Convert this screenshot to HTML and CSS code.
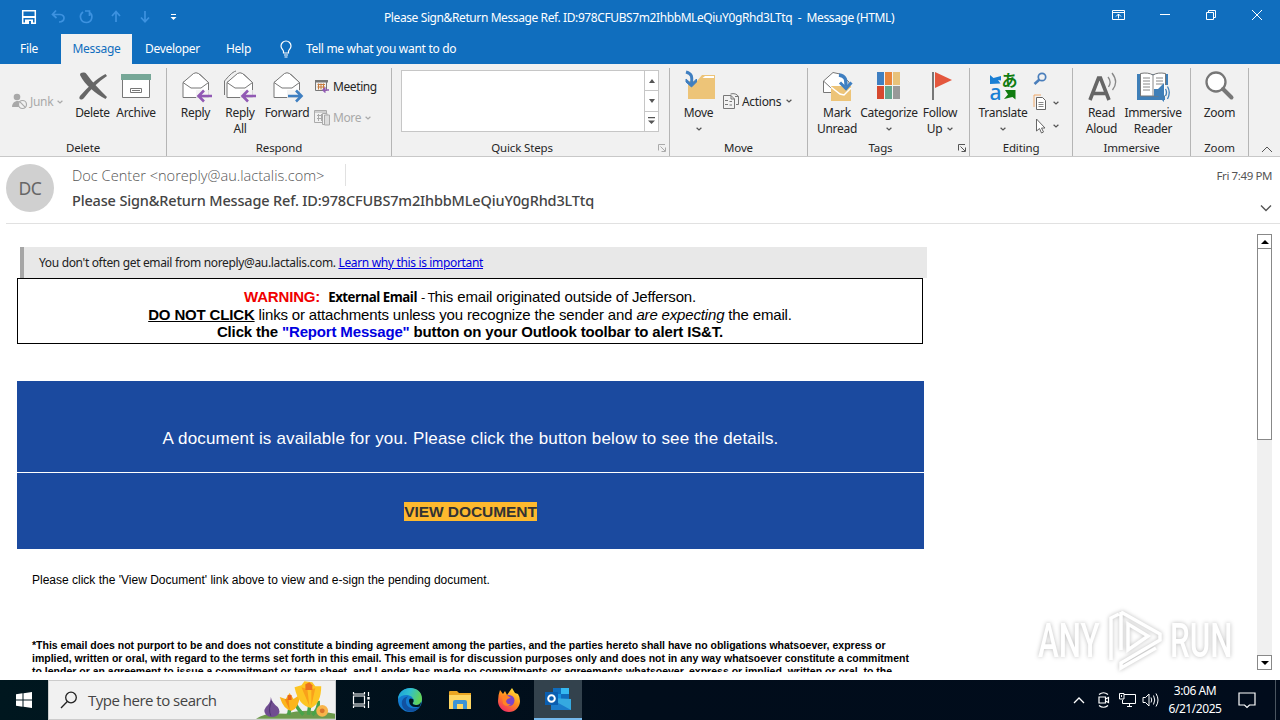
FILE: index.html
```html
<!DOCTYPE html>
<html lang="en">
<head>
<meta charset="utf-8">
<title>Message (HTML)</title>
<link rel="stylesheet" href="styles.css">
</head>
<body>

<svg width="0" height="0" class="defs">
  <symbol id="chev" viewBox="0 0 6 4"><path d="M.6 .7L3 3L5.400 .7" fill="none" stroke="currentColor" stroke-width="1.2"/></symbol>
  <symbol id="envelope" viewBox="0 0 34 34">
    <path d="M4 12.500L17 3.500L21 4.500L29.500 12.500V27.500H4Z" fill="#fff" stroke="#777"/>
    <path d="M4 12.500L14.500 3.500Q17 2 19.500 3.500L29.500 12.500L22 18H12Z" fill="#fff" stroke="#777"/>
  </symbol>
  <symbol id="launch" viewBox="0 0 8 8"><path d="M.5 6.500V.5H7M2.500 2.500L7 7M7.500 3.500V7.500H3.500" fill="none" stroke="currentColor"/></symbol>
</svg>

<!-- title bar -->
<div class="titlebar">
  <svg class="qat" width="190" height="32" viewBox="0 0 190 32" fill="none">
    <path d="M22.700 10.700H35.300V23.300H22.700Z" stroke="#fff" stroke-width="1.500"/>
    <path d="M23 16H35V18H23Z" fill="#fff"/><path d="M25 19.500H33V24H25Z" fill="#fff"/><path d="M29 21H31V24H29Z" fill="#106ebe"/>
    <g stroke="#3d92e0" stroke-width="1.700">
      <path d="M56 10.500L52.500 14.500L56.500 18M53 14.500H60C66 15 65 22 59 22"/>
      <path d="M83 12C78 16 81 22.500 86.500 22.500S94 15 89 12M85 11H89.500V16"/>
      <path d="M116 22V12M112 16L116 11.500L120 16"/>
      <path d="M145 11V21M141 17.500L145 21.800L149 17.500"/>
    </g>
    <path d="M171 14.500H176" stroke="#fff"/><path d="M170.500 17H176.500L173.500 20Z" fill="#fff"/>
  </svg>
  <div class="caption">Please Sign&amp;Return Message Ref. ID:978CFUBS7m2IhbbMLeQiuY0gRhd3LTtq &nbsp;-&nbsp; Message (HTML)</div>
  <svg class="winbtns" width="180" height="32" viewBox="1100 0 180 32" fill="none" stroke="#fff">
    <path d="M1112.500 10.500H1124.500V19.500H1112.500ZM1112.500 12.500H1124.500M1118.500 18.500V14M1116 16.500L1118.500 14L1121 16.500"/>
    <path d="M1160 14.500H1170"/>
    <path d="M1206.500 12.500H1213.500V19.500H1206.500ZM1208.500 12V10.500H1215.500V17.500H1214"/>
    <path d="M1252 10L1262 20M1262 10L1252 20"/>
  </svg>
</div>

<!-- ribbon tabs -->
<div class="tabs">
  <div class="tab file">File</div>
  <div class="tab active">Message</div>
  <div class="tab dev">Developer</div>
  <div class="tab help">Help</div>
  <svg class="bulb" width="14" height="18" viewBox="0 0 14 18" fill="none" stroke="#fff" stroke-width="1.200"><path d="M4.500 13V11.500C4.500 10 2 9 2 6A5 5 0 0 1 12 6C12 9 9.500 10 9.500 11.500V13ZM5 15H9M5.500 17H8.500"/></svg>
  <div class="tellme">Tell me what you want to do</div>
</div>

<!-- ribbon -->
<div class="ribbon">
  <div class="group g-delete">
    <div class="tools">
      <div class="small off junk">
        <svg width="17" height="17" viewBox="0 0 17 17"><circle cx="6" cy="4" r="3.300" fill="#a9a9a9"/><path d="M1 14C1 7 10 7 10 10V14Z" fill="#a9a9a9"/><circle cx="11.500" cy="11.500" r="4" fill="#f1f1f1" stroke="#a9a9a9" stroke-width="1.200"/><path d="M8.700 8.700L14.300 14.300" stroke="#a9a9a9" stroke-width="1.200"/></svg>
        <span>Junk</span><svg class="chev"><use href="#chev"/></svg>
      </div>
      <div class="big del">
        <svg width="34" height="34" viewBox="0 0 34 34"><path d="M4 5C4 2 9 2 10.500 4C17 13 24 20 31 27L29.500 29C19 23 9 15 4 5Z" fill="#666"/><path d="M29.500 4L31 6C22 12 14 20 8 28C5 31 2 29 4 26C12 17 20 9 29.500 4Z" fill="#666"/></svg>
        <span>Delete</span>
      </div>
      <div class="big arch">
        <svg width="34" height="34" viewBox="0 0 34 34"><path d="M3.500 9V27.500H30.500V9" fill="#fff" stroke="#777"/><path d="M2 4H32V10H2Z" fill="#76a797"/><path d="M11.500 18.500H22.500V22.500H11.500ZM13 20.500H21" fill="none" stroke="#777"/></svg>
        <span>Archive</span>
      </div>
    </div>
    <div class="gname">Delete</div>
  </div>

  <div class="group g-respond">
    <div class="tools">
      <div class="big reply">
        <svg width="34" height="34" viewBox="0 0 34 34"><use href="#envelope"/><path d="M17 20H34V32H17Z" fill="#f1f1f1" opacity=".8"/><path d="M33 26H20M25 20.500L19.500 26L25 31.500" fill="none" stroke="#9159b4" stroke-width="2.600"/></svg>
        <span>Reply</span>
      </div>
      <div class="big replyall">
        <svg width="34" height="34" viewBox="0 0 34 34"><path d="M1.500 25V11C5 7 9 2 13 1" fill="none" stroke="#777"/><use href="#envelope"/><path d="M17 20H34V32H17Z" fill="#f1f1f1" opacity=".8"/><path d="M33 26H20M25 20.500L19.500 26L25 31.500" fill="none" stroke="#9159b4" stroke-width="2.600"/></svg>
        <span>Reply<br>All</span>
      </div>
      <div class="big forward">
        <svg width="34" height="34" viewBox="0 0 34 34"><use href="#envelope"/><path d="M17 20H34V32H17Z" fill="#f1f1f1" opacity=".8"/><path d="M18 26H31M26 20.500L31.500 26L26 31.500" fill="none" stroke="#3f7fc1" stroke-width="2.600"/></svg>
        <span>Forward</span>
      </div>
      <div class="stack resp">
        <div class="small">
          <svg width="17" height="17" viewBox="0 0 17 17" fill="none"><path d="M1.500 2.500H12.500V12.500H1.500Z" stroke="#777"/><path d="M1 2H14V4.500H1Z" fill="#777"/><path d="M3.500 6.500H11M3.500 9H11M4.500 5.500V11.500M7 5.500V11.500M9.500 5.500V11" stroke="#c77b3c"/><path d="M15 12H9M11.500 9.500L9 12L11.500 14.500" stroke="#9159b4" stroke-width="1.500"/></svg>
          <span>Meeting</span>
        </div>
        <div class="small off">
          <svg width="17" height="17" viewBox="0 0 17 17" fill="none" stroke="#aaa"><path d="M.5 1.500H12.500V13.500H.5ZM1 3H12" /><path d="M3 6.500H9M3 9.500H9M4.500 5V12M7.500 5V12"/><path d="M8.500 4.500H13V15.500H8.500Z" fill="#f1f1f1"/><path d="M10.500 6H15.500V16H10.500Z" fill="#ddd"/></svg>
          <span>More</span><svg class="chev"><use href="#chev"/></svg>
        </div>
      </div>
    </div>
    <div class="gname">Respond</div>
  </div>

  <div class="group g-quick">
    <div class="tools">
      <div class="gallery">
        <div class="gbtns">
          <div class="gbtn"><svg width="6" height="4"><path d="M0 4L3 0L6 4Z" fill="#555"/></svg></div>
          <div class="gbtn"><svg width="6" height="4"><path d="M0 0H6L3 4Z" fill="#555"/></svg></div>
          <div class="gbtn"><svg width="7" height="8"><path d="M0 0H7V1.200H0ZM0 3.500H7L3.500 7Z" fill="#555"/></svg></div>
        </div>
      </div>
    </div>
    <div class="gname">Quick Steps</div>
    <svg class="launch faint"><use href="#launch"/></svg>
  </div>

  <div class="group g-move">
    <div class="tools">
      <div class="big move">
        <svg width="34" height="34" viewBox="0 0 34 34"><path d="M6 11H15L20 5H33V29H6Z" fill="#edc478"/><path d="M20.500 8L23 6H32V8Z" fill="#fff"/><path d="M4 2C11 4 10 8 9.500 14" fill="none" stroke="#3f7fc1" stroke-width="3"/><path d="M4 9L9.500 14L14.500 9V12L9.500 17L4 12Z" fill="#3f7fc1" stroke="#3f7fc1"/></svg>
        <span>Move</span><svg class="chev"><use href="#chev"/></svg>
      </div>
      <div class="small actions">
        <svg width="17" height="17" viewBox="0 0 17 17" fill="none" stroke="#777"><path d="M.5 2.500H8L11.500 6V15.500H.5ZM8 2.500V6H11.500M7.500 1C11 0 14 1 15.500 3.500M12 3.500H15.500V11.500H13M2 7.500H5M2 11.500H5M6.500 8.500H9M6.500 12H9"/></svg>
        <span>Actions</span><svg class="chev"><use href="#chev"/></svg>
      </div>
    </div>
    <div class="gname">Move</div>
  </div>

  <div class="group g-tags">
    <div class="tools">
      <div class="big mark">
        <svg width="34" height="34" viewBox="0 0 34 34"><path d="M3.500 11L13 2.500L20 4L29 12V22.500H3.500Z" fill="#fff" stroke="#777"/><path d="M3.500 11L11 18" stroke="#777"/><path d="M11 16H31V31H11Z" fill="#edc478"/><path d="M11 17L20 24L24 25L31 18" fill="none" stroke="#fff" stroke-width="1.500"/><path d="M19 5C26 6 26 10 26 16" fill="none" stroke="#3f7fc1" stroke-width="3.400"/><path d="M20 12.500L26 18.500L31.500 12.500" fill="none" stroke="#3f7fc1" stroke-width="3"/></svg>
        <span>Mark<br>Unread</span>
      </div>
      <div class="big cat">
        <svg width="34" height="34" viewBox="0 0 34 34"><path d="M5 2H12V15H5Z" fill="#3f7fc1"/><path d="M13 2H20V15H13Z" fill="#e8853c"/><path d="M21 2H28V15H21Z" fill="#e8c27a"/><path d="M5 16H12V29H5Z" fill="#d6492f"/><path d="M13 16H20V29H13Z" fill="#66a58e"/><path d="M21 16H28V29H21Z" fill="#999"/></svg>
        <span>Categorize</span><svg class="chev"><use href="#chev"/></svg>
      </div>
      <div class="big flag">
        <svg width="34" height="34" viewBox="0 0 34 34"><path d="M10 2V30" stroke="#777" stroke-width="2"/><path d="M12 2L29 10L12 18Z" fill="#e4573d"/></svg>
        <span>Follow<br>Up <svg class="chev inline"><use href="#chev"/></svg></span>
      </div>
    </div>
    <div class="gname">Tags</div>
    <svg class="launch"><use href="#launch"/></svg>
  </div>

  <div class="group g-edit">
    <div class="tools">
      <div class="big trans">
        <svg class="loose" width="34" height="34" viewBox="0 0 34 34"><path d="M4 5L7.500 8L15 6V10.500L12 10L14.500 13.500L4 14Z" fill="#1a7fd4"/><text x="3.500" y="30" class="ico-a">a</text><text x="15.500" y="16" class="ico-ja">あ</text><path d="M19 20H29.500V29.500L26.500 27L18 29L22 24.500Z" fill="#107c10"/></svg>
        <span>Translate</span><svg class="chev"><use href="#chev"/></svg>
      </div>
      <div class="stack edit">
        <div class="small"><svg width="15" height="15" viewBox="0 0 15 15" fill="none" stroke="#4a7ebb" stroke-width="1.700"><circle cx="9" cy="5" r="3.700"/><path d="M6.500 7.500L1.500 12" stroke-width="2.600"/></svg></div>
        <div class="small"><svg width="15" height="17" viewBox="0 0 15 17" fill="none"><path d="M1 13V1H8" stroke="#f0a868"/><path d="M3.500 3.500H9.500L12.500 6.500V15.500H3.500Z" fill="#fff" stroke="#666"/><path d="M5.500 8.500H10.500M5.500 10.500H10.500M5.500 12.500H10.500" stroke="#888"/></svg><svg class="chev"><use href="#chev"/></svg></div>
        <div class="small"><svg width="15" height="16" viewBox="0 0 15 16"><path d="M3.500 1V13L6.500 10.500L8.500 15L10.500 14L8.500 10H12Z" fill="#fff" stroke="#666"/></svg><svg class="chev"><use href="#chev"/></svg></div>
      </div>
    </div>
    <div class="gname">Editing</div>
  </div>

  <div class="group g-imm">
    <div class="tools">
      <div class="big read">
        <svg width="34" height="34" viewBox="0 0 34 34" fill="none"><path d="M5 30L13.500 8H15.500L24 30M8.500 23.500H20.500" stroke="#666" stroke-width="3.600"/><path d="M23 7Q27 12 23.500 17M27 3Q34 12 27.500 20" stroke="#888" stroke-width="1.300"/></svg>
        <span>Read<br>Aloud</span>
      </div>
      <div class="big immr">
        <svg width="34" height="34" viewBox="0 0 34 34"><path d="M1 4H32V30H1Z" fill="#3f7fb8"/><path d="M4.500 3.500Q12 2 17 5Q22 2 29.500 3.500V26H17H4.500Z" fill="#fff" stroke="#777"/><path d="M17 5V26M7 8H14M7 11H14M7 14H14M7 17H14M7 20H14M20 8H27M20 11H27M20 14H27" stroke="#888"/><path d="M29 15H34V31H29Z" fill="#f1f1f1"/><path d="M18 19H22L28 13V32L22 26H18Z" fill="#3f7fb8"/><path d="M29.500 19Q31.500 22.500 29.500 26M31.500 16.500Q35 22.500 31.500 29" fill="none" stroke="#3f7fb8" stroke-width="1.300"/></svg>
        <span>Immersive<br>Reader</span>
      </div>
    </div>
    <div class="gname">Immersive</div>
  </div>

  <div class="group g-zoom">
    <div class="tools">
      <div class="big zoom">
        <svg width="34" height="34" viewBox="0 0 34 34"><circle cx="13" cy="12" r="9.500" fill="#fff" stroke="#777" stroke-width="2.300"/><path d="M20 19L28.500 27.500" stroke="#777" stroke-width="4" stroke-linecap="round"/></svg>
        <span>Zoom</span>
      </div>
    </div>
    <div class="gname">Zoom</div>
  </div>
  <svg class="collapse" width="12" height="7" viewBox="0 0 12 7"><path d="M1 6L6 1L11 6" fill="none" stroke="#555"/></svg>
</div>

<!-- message header -->
<div class="msghead">
  <div class="avatar">DC</div>
  <div class="who">
    <div class="from"><span>Doc Center &lt;noreply@au.lactalis.com&gt;</span></div>
    <div class="subject">Please Sign&amp;Return Message Ref. ID:978CFUBS7m2IhbbMLeQiuY0gRhd3LTtq</div>
  </div>
  <div class="when">
    <div class="date">Fri 7:49 PM</div>
    <svg width="12" height="8" viewBox="0 0 12 8"><path d="M1 1.500L6 6.500L11 1.500" fill="none" stroke="#555" stroke-width="1.400"/></svg>
  </div>
</div>

<!-- message body -->
<div class="reading">
  <div class="mail">
    <div class="tip">You don't often get email from noreply@au.lactalis.com. <a>Learn why this is important</a></div>
    <div class="warning">
      <div class="w1"><b class="red">WARNING:</b>&nbsp; <b class="ext">External Email</b> <span class="ext">- T</span>his email originated outside of Jefferson.</div>
      <div class="w2"><b><u>DO NOT CLICK</u></b> links or attachments unless you recognize the sender and <i>are expecting</i> the email.</div>
      <div class="w3"><b>Click the <span class="blue">"Report Message"</span> button on your Outlook toolbar to alert IS&amp;T.</b></div>
    </div>
    <div class="band top"><span>A document is available for you. Please click the button below to see the details.</span></div>
    <div class="band bottom"><span class="view">VIEW DOCUMENT</span></div>
    <div class="note">Please click the 'View Document' link above to view and e-sign the pending document.</div>
    <div class="legal">
      <div>*This email does not purport to be and does not constitute a binding agreement among the parties, and the parties hereto shall have no obligations whatsoever, express or</div>
      <div>implied, written or oral, with regard to the terms set forth in this email. This email is for discussion purposes only and does not in any way whatsoever constitute a commitment</div>
      <div>to lender or an agreement to issue a commitment or term sheet, and Lender has made no commitments or agreements whatsoever, express or implied, written or oral, to the</div>
    </div>
  </div>
  <div class="scroll">
    <div class="arrow"><svg width="8" height="4"><path d="M0 4L4 0L8 4Z"/></svg></div>
    <div class="thumb"></div>
    <div class="track"></div>
    <div class="arrow"><svg width="8" height="4"><path d="M0 0H8L4 4Z"/></svg></div>
  </div>
</div>

<div class="watermark">
  <span>ANY</span>
  <svg width="58" height="64" viewBox="0 0 58 64" fill="none" stroke="#fff" stroke-width="3.500"><path d="M5 52V10L13 6M15 4V42M15 4L54 26V32L15 55V60L50 40M22 16L42 28L22 42Z"/></svg>
  <span>RUN</span>
</div>

<!-- taskbar -->
<div class="taskbar">
  <div class="start"><svg width="16" height="16" viewBox="0 0 16 16" fill="#fff"><path d="M0 2.300L6.500 1.300V7.500H0ZM7.500 1.200L16 0V7.500H7.500ZM0 8.500H6.500V14.700L0 13.700ZM7.500 8.500H16V16L7.500 14.800Z"/></svg></div>
  <div class="search">
    <svg width="18" height="18" viewBox="0 0 18 18" fill="none" stroke="#222" stroke-width="1.300"><circle cx="11" cy="6.500" r="5.300"/><path d="M7.300 10.500L1 17"/></svg>
    <span>Type here to search</span>
    <svg class="flowers" width="80" height="38" viewBox="0 0 80 38">
      <path d="M0 38Q10 31 30 33Q50 27 80 33V38Z" fill="#6d9a4c"/>
      <path d="M33 34L35 24M53 34L55 20M48 34Q42 28 40 23M57 34Q64 28 63 20" stroke="#48a34a" stroke-width="3.500" fill="none"/>
      <path d="M15 16Q16 22 22 26Q26 31 21 35Q15 38 10 34Q6 29 12 24Q15 21 15 16Z" fill="#704d91"/><path d="M16 20Q12 28 15 35" stroke="#4d346f" fill="none"/>
      <path d="M24 16L30 18L34 12L38 18L44 14Q44 27 36 30Q28 29 24 16Z" fill="#fbb51c"/><path d="M29 18L34 29L33 18Z" fill="#f58b14"/><path d="M32 14H36V19H32Z" fill="#e8641b"/>
      <path d="M39 6L46 4L49 0L57 1L60 5L66 5Q66 22 56 27Q43 25 39 6Z" fill="#fdc523"/><path d="M46 6L54 25L52 8ZM60 7L56 25L56 8Z" fill="#f9a11b"/><path d="M50 3L54 1L57 4V9H50Z" fill="#ec7021"/>
      <circle cx="67" cy="30" r="6" fill="#f8b54b"/><circle cx="67" cy="30" r="2.500" fill="#d9752b"/>
    </svg>
  </div>
  <div class="task"><svg width="18" height="18" viewBox="0 0 18 18" fill="none" stroke="#fff" stroke-width="1.200"><path d="M1.500 5H12.500V13H1.500ZM1.500 1V3H12.500V1M1.500 17V15H12.500V17M16.500 1V5M16.500 10V17"/><path d="M15.300 6H17.700V8.500H15.300Z" fill="#fff" stroke="none"/></svg></div>
  <div class="task"><svg width="24" height="24" viewBox="0 0 24 24"><defs><linearGradient id="eg" x1="0" x2="1" y1="0" y2=".3"><stop offset="0" stop-color="#189dd8"/><stop offset=".5" stop-color="#2fbfd0"/><stop offset="1" stop-color="#62d35a"/></linearGradient></defs><circle cx="12" cy="12" r="12" fill="#137bd0"/><path d="M0 11C1-3 24-4 24 11C24 17 18 18 15 16C14 15 16 14 15.500 11.500C14 6 4 5 0 11Z" fill="url(#eg)"/><path d="M8 12C7 20 15 22 21.500 19C17 26 6 25 4 17C3 12 6 9 10 8.500C8.500 10 8 11 8 12Z" fill="#1151a0"/><path d="M15.500 11.500Q16 14 14.500 15Q15 18 21 16.500L23 14L22 18.500Q12 21 11 13Q11 9 15.500 11.500Z" fill="#00171f"/></svg></div>
  <div class="task"><svg width="22" height="20" viewBox="0 0 22 20"><path d="M0 2Q0 1 1 1H8L10 3H22V18H0Z" fill="#e9a522"/><path d="M0 5H22V19H0Z" fill="#fdd663"/><path d="M4 12Q4 10 6 10H16Q18 10 18 12V19H14V14H8V19H4Z" fill="#3c94d6"/></svg></div>
  <div class="task"><svg width="24" height="24" viewBox="0 0 24 24"><defs><linearGradient id="ff" x1=".8" x2=".2" y1="0" y2="1"><stop offset="0" stop-color="#ffe93a"/><stop offset=".5" stop-color="#ff8a1e"/><stop offset="1" stop-color="#f0246b"/></linearGradient></defs><path d="M3 2L6 6L8 3L10 7L15 0L18 5L21 6Q23 9 23 13A11 11 0 0 1 1 13Q1 7 3 2Z" fill="url(#ff)"/><circle cx="12" cy="12.500" r="5.500" fill="#7b45c9"/><path d="M5 8Q8 6 11 8L14 10Q10 10 9 13Q10 17 14 16Q10 20 6 16Z" fill="#ff8425"/></svg></div>
  <div class="task on"><svg width="26" height="24" viewBox="0 0 26 24"><path d="M8 1H24V13H8Z" fill="#1490df"/><path d="M16 1H24V7H16Z" fill="#35b8f1"/><path d="M8 1H16V7H8ZM16 7H24V13H16Z" fill="#0f6cbd"/><path d="M6 11L26 12V23H6Z" fill="#35a9e0"/><path d="M6 23V12L26 23Z" fill="#1b7ccb"/><path d="M0 5H13V18H0Z" fill="#0a5eb0"/><circle cx="6.500" cy="11.500" r="3.300" fill="none" stroke="#fff" stroke-width="2"/></svg></div>
  <div class="tray">
    <svg class="t1" width="12" height="7" viewBox="0 0 12 7"><path d="M1 6L6 1L11 6" fill="none" stroke="#fff" stroke-width="1.300"/></svg>
    <svg class="t2" width="14" height="18" viewBox="0 0 14 18" fill="none" stroke="#fff" stroke-width="1.200"><path d="M2 6H8.500V12H2ZM8.500 8L11.500 6.500V11.500L8.500 10M2 3.500Q6.500 0 11 3.500M2 14.500Q6.500 18 11 14.500"/></svg>
    <svg class="t3" width="17" height="16" viewBox="0 0 17 16" fill="none" stroke="#fff"><path d="M5 2.500H16.500V11.500H3.500V8M8 14.500H13M10.500 11.500V14.500M.5 1.500H5V7H.5ZM2.500 3V5"/></svg>
    <svg class="t3" width="18" height="16" viewBox="0 0 18 16" fill="none" stroke="#fff"><path d="M1 5.500H3.500L7 2V14L3.500 10.500H1ZM9 5.500Q10.500 8 9 10.500M11.500 3.500Q14 8 11.500 12.500M14 1.500Q18 8 14 14.500"/></svg>
    <div class="clock">3:06 AM<br>6/21/2025</div>
    <svg width="18" height="18" viewBox="0 0 18 18" fill="none" stroke="#fff" stroke-width="1.200"><path d="M1 2H17V14H11.500L9 16.500L6.500 14H1Z"/></svg>
  </div>
  <div class="peek"></div>
</div>

</body>
</html>
```
FILE: styles.css
```css
* {box-sizing: border-box;}
body {margin: 0; width: 1280px; height: 720px; overflow: hidden; background: #fff; font: 12px "Noto Sans", sans-serif; color: #262626; position: relative;}
svg {display: block; flex: none;}
.defs {position: absolute;}

/* title bar and tabs */
.titlebar {display: flex; height: 34px; background: #106ebe; color: #fff;}
.caption {line-height: 35px; letter-spacing: -.4px; white-space: nowrap; width: 520px;}
.qat {margin-right: 194px;}
.winbtns {margin-left: auto;}
.tabs {display: flex; height: 30px; background: #106ebe; color: #fff; line-height: 30px; letter-spacing: -.3px; white-space: nowrap;}
.tab {text-align: center;}
.file {width: 58px; margin-right: 3px;}
.active {width: 71px; background: #f1f1f1; color: #106ebe;}
.dev {width: 81px;}
.help {width: 51px;}
.bulb {margin: 6px 0 0 15px;}
.tellme {margin-left: 13px;}

/* ribbon */
.ribbon {display: flex; height: 93px; background: #f1f1f1; border-bottom: 1px solid #c8c8c8; letter-spacing: -.3px; position: relative;}
.group {height: 88px; margin-top: 4px; border-right: 1px solid #b5b5b5; display: flex; flex-direction: column; position: relative;}
.tools {height: 72px; display: flex;}
.gname {text-align: center; line-height: 16px; letter-spacing: -.15px; font-size: 11.5px; white-space: nowrap;}
.g-delete {width: 167px;}
.g-respond {width: 225px;}
.g-quick {width: 278px; padding-left: 9px;}
.g-quick .gname {padding-right: 26px;}
.g-move {width: 138px;}
.g-tags {width: 162px;}
.g-tags .gname {padding-right: 16px;}
.g-edit {width: 103px;}
.g-imm {width: 118px;}
.g-zoom {width: 58px;}
.big {display: flex; flex-direction: column; align-items: center; text-align: center; line-height: 16px; padding-top: 2px; white-space: nowrap;}
.big > span {margin-top: 1px;}
.big > .chev {margin-top: 6px;}
.small {display: flex; align-items: center; white-space: nowrap;}
.chev {width: 6px; height: 4px; color: #555;}
.chev.inline {display: inline-block; vertical-align: 2px; margin-left: 2px;}
.off {color: #a9a9a9;}
.off .chev {color: #a9a9a9;}
.stack {display: flex; flex-direction: column;}
.junk {width: 74px; padding: 1px 0 0 11px; height: 66px;}
.junk span {margin: 0 4px 0 2px;}
.del {width: 37px;}
.arch {width: 50px;}
.reply {width: 57px;}
.replyall {width: 32px;}
.forward {width: 62px;}
.resp {padding-top: 10px; gap: 14px; margin-left: -4px;}
.resp span {margin: 0 4px 0 2px; letter-spacing: -.4px;}
.launch {position: absolute; right: 3px; bottom: 4px; width: 8px; height: 8px; color: #555;}
.faint {color: #aaa;}
.gallery {width: 258px; height: 62px; margin-top: 2px; border: 1px solid #c6c6c6; background: #fff; display: flex; justify-content: flex-end;}
.gbtns {width: 14px; border-left: 1px solid #c6c6c6; display: flex; flex-direction: column;}
.gbtn {flex: 1; display: flex; align-items: center; justify-content: center;}
.gbtn + .gbtn {border-top: 1px solid #c6c6c6;}
.move {width: 48px; padding-left: 9px;}
.actions {height: 66px; margin-left: 5px;}
.actions span {margin: 0 5px 0 2px;}
.mark {width: 58px;}
.cat {width: 46px;}
.flag {width: 56px;}
.trans {width: 66px;}
.edit .small {height: 23px; gap: 5px;}
.edit {margin-left: -3px;}
.read {width: 57px;}
.immr {width: 46px;}
.zoom {width: 57px;}
.collapse {margin: 82px 0 0 12px;}
.loose {overflow: visible;}
.ico-a {font: 500 21px/1 "Noto Sans", sans-serif; fill: #1a7fd4;}
.ico-ja {font: 700 16px/1 "Noto Sans CJK JP", sans-serif; fill: #107c10;}

/* message header */
.msghead {display: flex; height: 67px; margin: 0 0 0 6px; border-bottom: 1px solid #e1e1e1;}
.avatar {width: 48px; height: 48px; margin-top: 7px; border-radius: 50%; background: #d0d0d0; color: #666; font-size: 17.5px; line-height: 48px; text-align: center; letter-spacing: -.5px;}
.who {margin-left: 18px; white-space: nowrap;}
.from {color: #555; font: 300 14.6px/22px "Open Sans", sans-serif; padding-top: 7px; height: 29px;}
.from span {display: inline-block; width: 274px; border-right: 1px solid #e1e1e1;}
.subject {font-size: 14.5px; line-height: 28px; color: #444; font-weight: 500; letter-spacing: -.16px;}
.when {margin-left: auto; display: flex; flex-direction: column; align-items: flex-end; padding-right: 8px;}
.date {line-height: 20px; margin-top: 9px; font-size: 11.5px; letter-spacing: -.4px; color: #555;}
.when svg {margin-top: 18px;}

/* reading pane */
.reading {display: flex; justify-content: space-between; height: 448px; padding-left: 17px; overflow: hidden; color: #000;}
.mail {width: 910px; padding-top: 23px; font-family: "Liberation Sans", Arial, sans-serif; white-space: nowrap;}
.tip {width: 907px; height: 31px; margin-left: 3px; background: #e8e8e8; border-left: 4px solid #a6a6a6; padding-left: 15px; font: 12px/31px "Noto Sans", sans-serif; letter-spacing: -.34px; color: #222;}
.tip a {color: #0000e0; text-decoration: underline;}
.warning {width: 906px; height: 66px; border: 1px solid #000; text-align: center; font-size: 15px; line-height: 17.5px; letter-spacing: -.16px; padding-top: 9px;}
.w1 {height: 18px;}
.w2, .w3 {height: 17px;}
.ext {font: 700 13.3px/17px "Open Sans", sans-serif; letter-spacing: -.5px;}
span.ext {font-weight: 400;}
.red {color: #f00000;}
.blue {color: #0000e0;}
.band {width: 907px; background: #1b4a9f; color: #fff; text-align: center; font-size: 17px;}
.top {height: 91px; margin-top: 37px; line-height: 115px; letter-spacing: .17px;}
.bottom {height: 76px; margin-top: 1px; line-height: 77px;}
.view {background: #fdb92e; color: #333; font-weight: 700; font-size: 15.5px; letter-spacing: -.06px; padding: 1px 0;}
.note {margin: 23px 0 0 15px; font-size: 12px; line-height: 16px;}
.legal {margin: 51px 0 0 15px; font-size: 10.5px; font-weight: 700; line-height: 13px;}
.scroll {width: 15px; margin: 10px 8px 2px 0; display: flex; flex-direction: column;}
.arrow {height: 15px; border: 1px solid #888; display: flex; align-items: center; justify-content: center;}
.thumb {height: 192px; border: 1px solid #888; background: #fff; margin-top: -1px;}
.track {flex: 1; background: #f0f0f0;}

.watermark {position: absolute; left: 1038px; top: 608px; display: flex; align-items: center; gap: 6px; color: #fff; filter: drop-shadow(0 0 2px #bbb);}
.watermark span {font: 500 49px "Roboto", sans-serif; transform: scaleX(.64); transform-origin: 0 50%; width: 62px;}

/* taskbar */
.taskbar {display: flex; height: 40px; margin-top: 8px; background: linear-gradient(90deg, #00171f, #010d1b 50%, #010c1c); color: #fff;}
.start {width: 48px; display: flex; align-items: center; justify-content: center;}
.search {width: 288px; background: #f1f1f1; border: 1px solid #ccc; display: flex; align-items: center; padding-left: 11px; color: #444; font: 15px "Open Sans", sans-serif; letter-spacing: -.5px;}
.search span {margin-left: 10px; width: 170px; white-space: nowrap;}
.flowers {flex: 0 1 auto;}
.task {width: 49.5px; display: flex; align-items: center; justify-content: center;}
.on {width: 48px; background: #33424d; border-bottom: 2px solid #76b9ed;}
.tray {margin-left: auto; display: flex; align-items: center;}
.t1 {margin-right: 12px;}
.t2 {margin-right: 8px;}
.t3 {margin-right: 6px;}
.clock {width: 58px; margin-right: 14px; text-align: center; line-height: 18px; letter-spacing: -.45px; font-size: 12px; white-space: nowrap;}
.peek {width: 5px; margin-left: 19px; border-left: 1px solid #4a5560;}
```
